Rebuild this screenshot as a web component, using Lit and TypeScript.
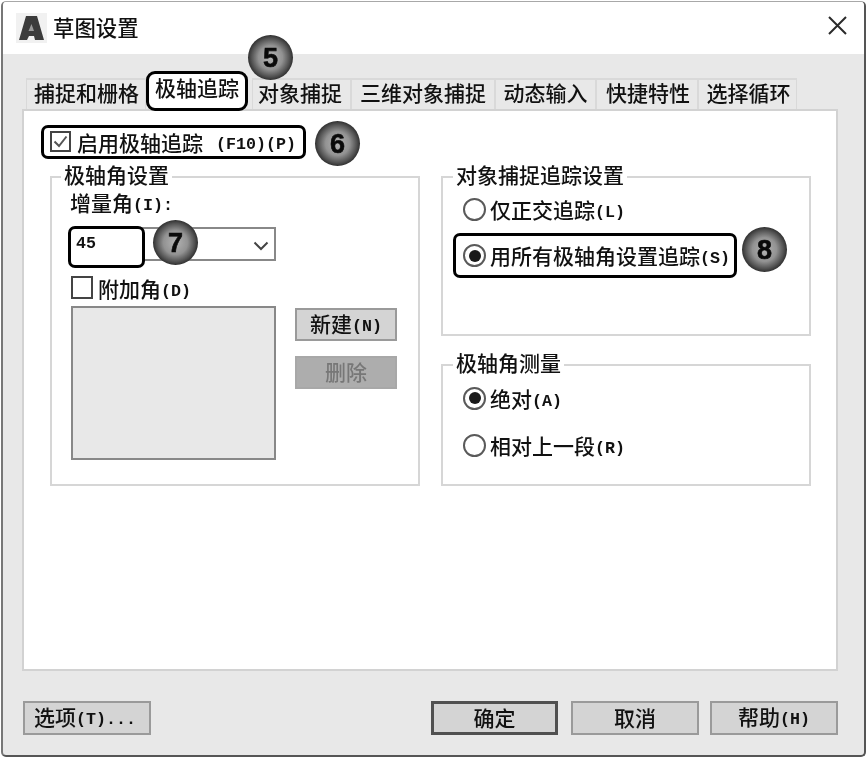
import { LitElement, html, css } from "lit";
import { customElement } from "lit/decorators.js";

@customElement("app-root")
export class AppRoot extends LitElement {
  static styles = css`
    :host { display: block; width: 868px; height: 758px; background: #fff; overflow: hidden; }
    .root { position: relative; width: 868px; height: 758px; background: #fff; filter: blur(0.45px);
      font-family: "Noto Sans CJK SC", "Liberation Sans", sans-serif; font-size: 21px; line-height: 24px; color: #111;
      font-weight: 500; }
    .l { font-family: "Liberation Mono", monospace; font-size: 16.67px; font-weight: 700; line-height: 1; vertical-align: 1.5px; }
    .gap { margin-left: 13px; }
    .window { box-sizing: border-box; position: absolute; left: 1px; top: 1px; width: 865px; height: 756px;
      border-style: solid; border-width: 1px 2px 2px 2px; border-color: #a8a8a8 #555 #555 #777; border-radius: 5px;
      display: flex; flex-direction: column; background: #e8e8e8; overflow: hidden; }
    .title { height: 52px; flex: none; background: #fff; display: flex; align-items: center; padding: 0 17px 0 13px; }
    .title svg.logo { width: 31px; height: 30px; margin-right: 6px; }
    .title .t { flex: 1; font-size: 21.4px; position: relative; top: -1px; }
    .title svg.x { width: 19px; height: 19px; margin-top: -5px; }
    .body { flex: 1; padding: 24px 26px 20px 19px; display: flex; flex-direction: column; }
    .tabs { display: grid; height: 31px; margin-left: 4px; align-items: stretch;
      grid-template-columns: 120px 106px 99px 144px 101px 102px 99px; grid-template-rows: 31px; }
    .tab { box-sizing: border-box; border: 2px solid #d9d9d9; border-bottom: none; border-left-width: 1px; border-right-width: 1px;
      display: flex; align-items: center; justify-content: center; padding-bottom: 5px; }
    .tab.active { position: relative; z-index: 2; width: 102px; height: 40px; margin-top: -7px; background: #fff;
      border: 3px solid #000; border-radius: 9px; padding: 0 0 8px; }
    .tab.first { justify-content: flex-start; padding-left: 7px; }
    .tab.obj { padding-right: 3px; }
    .tab.sh { padding-left: 2px; }
    .panel { box-sizing: border-box; height: 562px; background: #fff; border: 2px solid #d2d2d2; padding: 14px 24px 0 26px;
      display: grid; grid-template-columns: 370px 370px; column-gap: 21px; grid-template-rows: 34px auto; row-gap: 17px; align-content: start; }
    .hl { box-sizing: border-box; border: 3px solid #000; border-radius: 7px; background: #fff; width: fit-content; }
    .enable { grid-column: 1 / 3; margin-left: -9px; height: 34px; display: flex; align-items: center; padding: 0 7px 0 6px; }
    .enable .lbl { margin-left: 6px; white-space: nowrap; }
    .enable .box { margin-top: -2px; }
    .box { box-sizing: border-box; width: 21px; height: 21px; border: 2px solid #444; background: #fff; flex: none; }
    .box svg { display: block; width: 17px; height: 17px; }
    .group { box-sizing: border-box; border: 2px solid #d6d6d6; background: #fff; }
    .legend { margin: -16px 0 0 0; padding: 0 3px; background: #fff; width: fit-content; }
    .left { height: 310px; padding: 0 19px; }
    .left .legend { margin-left: -10px; }
    .inc { margin: 4px 0 0 -1px; }
    .combo { box-sizing: border-box; position: relative; margin-top: 13px; width: 205px; height: 34px; border: 2px solid #888; background: #fff; }
    .combo .hl45 { box-sizing: border-box; position: absolute; left: -5px; top: -3px; width: 77px; height: 42px; border: 3px solid #000;
      border-radius: 7px; padding: 7px 0 0 5px; background: #fff; vertical-align: baseline; }
    .combo svg { position: absolute; right: 5px; top: 12px; width: 16px; height: 10px; }
    .extra { display: flex; align-items: center; height: 23px; margin-top: 15px; }
    .extra .box { width: 22px; height: 23px; margin-right: 5px; }
    .listrow { display: flex; gap: 19px; margin-top: 7px; }
    .list { box-sizing: border-box; width: 205px; height: 154px; background: #e8e8e8; border: 2px solid #888; }
    .side { display: flex; flex-direction: column; gap: 15px; margin-top: 2px; }
    .btn { box-sizing: border-box; background: #d4d4d4; border: 2px solid #9a9a9a; display: flex; align-items: center; justify-content: center; white-space: pre; padding-bottom: 3px; }
    .side .btn { width: 102px; height: 33px; }
    .btn.dis { background: #adadad; border-color: #a8a8a8; color: #777; }
    .col { display: flex; flex-direction: column; gap: 28px; }
    .right { padding: 0 10px; }
    .r1 { height: 160px; }
    .r2 { height: 122px; }
    .radio { display: flex; align-items: center; height: 24px; padding-left: 10px; }
    .dot { box-sizing: border-box; width: 23px; height: 23px; border: 2px solid #5a5a5a; border-radius: 50%; background: #fff; margin-right: 4px; flex: none; display: flex; align-items: center; justify-content: center; }
    .dot.on::after { content: ""; width: 12px; height: 12px; border-radius: 50%; background: #1a1a1a; }
    .m10 { margin-top: 11px; }
    .m11 { margin-top: 12px; }
    .m23 { margin-top: 23px; }
    .radio.hl { height: 45px; margin-top: 12px; padding: 0 4px 0 7px; }
    .footer { display: flex; margin-top: 30px; height: 34px; margin-left: 1px; margin-right: -1px; }
    .footer .btn { width: 128px; height: 34px; }
    .footer .opt { justify-content: flex-start; padding-left: 9px; margin-right: 280px; }
    .footer .def { width: 127px; border: 3px solid #505050; margin-right: 13px; }
    .footer .cancel { margin-right: 11px; }
    .badge { position: absolute; z-index: 5; box-sizing: border-box; width: 45px; height: 45px; border-radius: 50%;
      background: radial-gradient(circle at 50% 50%, #b4b4b4 0, #929292 38%, #525252 60%, #1f1f1f 76%, #2e2e2e 84%, #b0b0b0 90%, #eee 100%);
      display: flex; align-items: center; justify-content: center;
      font-family: "Liberation Sans", sans-serif; font-weight: 700; font-size: 27px; color: #0a0a0a; -webkit-text-stroke: 0.6px #0a0a0a; }
    .b5 { left: 248px; top: 35px; }
    .b6 { left: 315px; top: 121px; }
    .b7 { left: 153px; top: 220px; }
    .b8 { left: 742px; top: 227px; }
  `;

  render() {
    const l = (s: string) => html`<span class="l">${s}</span>`;
    return html`<div class="root">
      <div class="window">
        <div class="title">
          <svg class="logo" viewBox="0 0 31 30">
            <rect x="0" y="0" width="31" height="30" fill="#f1f1f1"/>
            <path fill="#3c3c3c" d="M10 3 H21 L28 27 H19 L18 23 H13 L11 27 H3 Z"/>
            <path fill="#9a9a9a" d="M15.5 11 L12.5 18 H18 Z"/>
          </svg>
          <span class="t">草图设置</span>
          <svg class="x" viewBox="0 0 19 19"><path d="M1 1 L18 18 M18 1 L1 18" stroke="#2a2a2a" stroke-width="2" fill="none"/></svg>
        </div>
        <div class="body">
          <div class="tabs">
            <div class="tab first">捕捉和栅格</div>
            <div class="tab active">极轴追踪</div>
            <div class="tab obj">对象捕捉</div>
            <div class="tab">三维对象捕捉</div>
            <div class="tab">动态输入</div>
            <div class="tab sh">快捷特性</div>
            <div class="tab sh">选择循环</div>
          </div>
          <div class="panel">
            <div class="hl enable">
              <div class="box"><svg viewBox="0 0 17 17"><path d="M2.5 8.5 L7 13 L14.5 3.5" stroke="#555" stroke-width="2" fill="none"/></svg></div>
              <span class="lbl">启用极轴追踪<span class="l gap">(F10)(P)</span></span>
            </div>
            <div class="group left">
              <div class="legend">极轴角设置</div>
              <div class="inc">增量角${l("(I):")}</div>
              <div class="combo">
                <div class="hl45 l">45</div>
                <svg viewBox="0 0 16 10"><path d="M1.5 1.5 L8 8 L14.5 1.5" stroke="#444" stroke-width="2" fill="none"/></svg>
              </div>
              <div class="extra"><div class="box"></div><span>附加角${l("(D)")}</span></div>
              <div class="listrow">
                <div class="list"></div>
                <div class="side">
                  <div class="btn"><span>新建${l("(N)")}</span></div>
                  <div class="btn dis"><span>删除</span></div>
                </div>
              </div>
            </div>
            <div class="col">
              <div class="group right r1">
                <div class="legend">对象捕捉追踪设置</div>
                <div class="radio m10"><span class="dot"></span><span>仅正交追踪${l("(L)")}</span></div>
                <div class="radio hl"><span class="dot on"></span><span>用所有极轴角设置追踪${l("(S)")}</span></div>
              </div>
              <div class="group right r2">
                <div class="legend">极轴角测量</div>
                <div class="radio m11"><span class="dot on"></span><span>绝对${l("(A)")}</span></div>
                <div class="radio m23"><span class="dot"></span><span>相对上一段${l("(R)")}</span></div>
              </div>
            </div>
          </div>
          <div class="footer">
            <div class="btn opt"><span>选项${l("(T)...")}</span></div>
            <div class="btn def"><span>确定</span></div>
            <div class="btn cancel"><span>取消</span></div>
            <div class="btn"><span>帮助${l("(H)")}</span></div>
          </div>
        </div>
      </div>
      <div class="badge b5">5</div>
      <div class="badge b6">6</div>
      <div class="badge b7">7</div>
      <div class="badge b8">8</div>
    </div>`;
  }
}
